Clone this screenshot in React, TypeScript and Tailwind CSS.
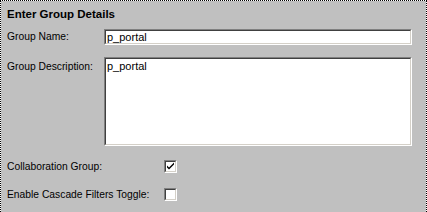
import React from "react";

function Sunken({ className = "", children }: { className?: string; children?: React.ReactNode }) {
  return (
    <div className={"border border-t-[#808080] border-l-[#808080] border-r-white border-b-white " + className}>
      <div className="h-full w-full border border-t-[#404040] border-l-[#404040] border-r-[#d4d0c8] border-b-[#d4d0c8] bg-white">
        {children}
      </div>
    </div>
  );
}

function Check({ checked }: { checked?: boolean }) {
  return (
    <Sunken className="h-[13px] w-[13px]">
      {checked && (
        <svg width="9" height="9" viewBox="0 0 9 9" className="block">
          <path d="M1 3.5 L1 5.5 L3 7.5 L8 2.5 L8 0.5 L3 5.5 Z" fill="#000" />
        </svg>
      )}
    </Sunken>
  );
}

export default function App() {
  const font = { fontFamily: '"Liberation Sans", Arial, sans-serif' };
  return (
    <div className="h-[212px] w-[427px] overflow-hidden bg-white" style={font}>
      <div className="h-[240px] w-[427px] border border-dotted border-black bg-[#c0c0c0] bg-clip-padding pl-[6px] text-black">
        <div className="mt-[6px] h-[14px] text-[11.5px] font-bold leading-[14px]">Enter Group Details</div>
        <div className="mt-[8px] flex items-center">
          <div className="w-[97px] text-[10.3px] leading-[16px]">Group Name:</div>
          <Sunken className="h-[16px] w-[308px]">
            <div className="pl-[1px] text-[11px] leading-[12px]">p_portal</div>
          </Sunken>
        </div>
        <div className="mt-[12px] flex items-start">
          <div className="w-[97px] pt-[3px] text-[10.3px] leading-[14px]">Group Description:</div>
          <Sunken className="h-[89px] w-[308px]">
            <div className="pl-[1px] pt-[1px] text-[11px] leading-[12px]">p_portal</div>
          </Sunken>
        </div>
        <div className="mt-[14px] flex items-center">
          <div className="w-[157px] text-[10.3px] leading-[13px]">Collaboration Group:</div>
          <Check checked />
        </div>
        <div className="mt-[15px] flex items-center">
          <div className="w-[157px] text-[10.3px] leading-[13px]">Enable Cascade Filters Toggle:</div>
          <Check />
        </div>
      </div>
    </div>
  );
}
